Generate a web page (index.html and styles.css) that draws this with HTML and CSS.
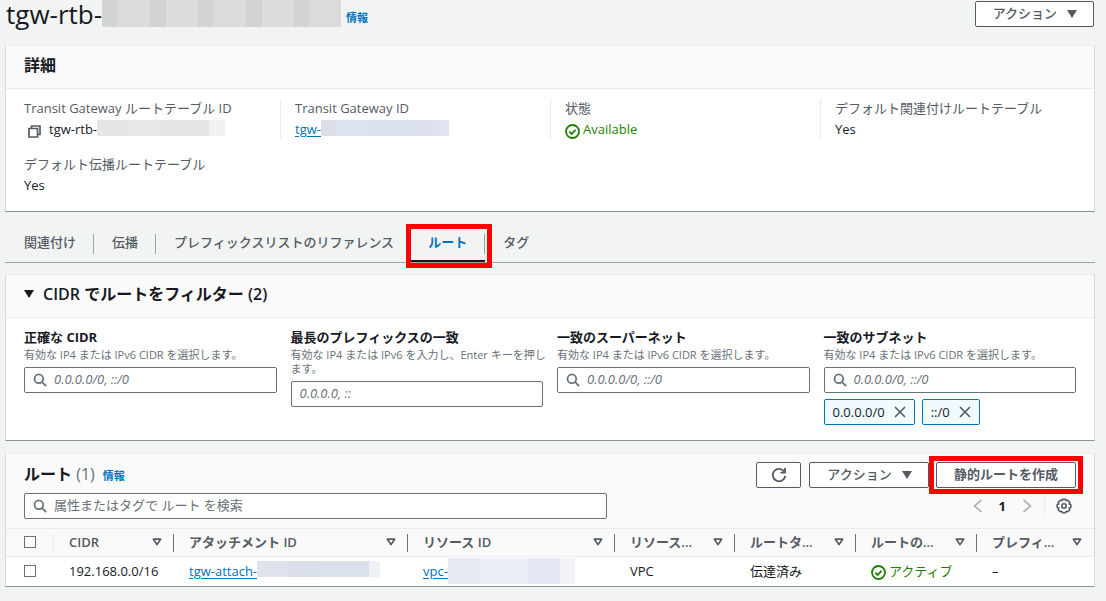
FILE: index.html
```html
<!DOCTYPE html>
<html lang="ja">
<head>
<meta charset="utf-8">
<title>Transit Gateway ルートテーブル</title>
<link rel="stylesheet" href="styles.css">
</head>
<body>
<svg class="defs" width="0" height="0" aria-hidden="true">
  <symbol id="search" viewBox="0 0 16 16"><circle cx="6.7" cy="6.7" r="5" fill="none" stroke="currentColor" stroke-width="2"/><path d="M10.2 10.2L15 15" stroke="currentColor" stroke-width="2"/></symbol>
  <symbol id="check" viewBox="0 0 16 16"><circle cx="8" cy="8" r="6.9" fill="none" stroke="currentColor" stroke-width="2"/><path d="M4.6 8.2l2.4 2.3 4.3-4.2" fill="none" stroke="currentColor" stroke-width="2"/></symbol>
  <symbol id="close" viewBox="0 0 12 12"><path d="M1 1l10 10M11 1L1 11" fill="none" stroke="currentColor" stroke-width="1.6"/></symbol>
  <symbol id="sort" viewBox="0 0 10 8"><path d="M1.4 1.2h7.2L5 6.6z" fill="none" stroke="currentColor" stroke-width="1.7" stroke-linejoin="round"/></symbol>
  <symbol id="caret" viewBox="0 0 10 8"><path d="M0 0h10L5 8z" fill="currentColor"/></symbol>
</svg>
<main class="page">
  <header class="page-head">
    <h1 class="page-title">tgw-rtb-<span class="mask mask-title"></span></h1>
    <a class="info" href="#">情報</a>
    <button class="btn push" type="button">アクション <svg class="caret"><use href="#caret"/></svg></button>
  </header>

  <section class="card">
    <div class="card-head"><h2 class="card-title">詳細</h2></div>
    <dl class="details">
      <div class="detail">
        <dt>Transit Gateway ルートテーブル ID</dt>
        <dd class="copy-value"><button class="icon-btn" type="button" aria-label="コピー"><svg class="ico-copy" viewBox="0 0 13 13"><path d="M3.5 3.5V1h8.5v8.500H9.500M1 3.500h8.500v8.500H1z" fill="none" stroke="currentColor" stroke-width="1.700"/></svg></button>tgw-rtb-<span class="mask mask-id"></span></dd>
      </div>
      <div class="detail">
        <dt>Transit Gateway ID</dt>
        <dd class="row-value"><a class="link" href="#">tgw-</a><span class="mask mask-id mask-blue"></span></dd>
      </div>
      <div class="detail">
        <dt>状態</dt>
        <dd class="ok"><svg class="ico-check"><use href="#check"/></svg>Available</dd>
      </div>
      <div class="detail">
        <dt>デフォルト関連付けルートテーブル</dt>
        <dd>Yes</dd>
      </div>
      <div class="detail">
        <dt>デフォルト伝播ルートテーブル</dt>
        <dd>Yes</dd>
      </div>
    </dl>
  </section>

  <nav class="tabs">
    <a class="tab" href="#">関連付け</a>
    <a class="tab" href="#">伝播</a>
    <a class="tab" href="#">プレフィックスリストのリファレンス</a>
    <a class="tab active marked" href="#">ルート</a>
    <a class="tab" href="#">タグ</a>
  </nav>

  <section class="card">
    <div class="card-head"><button class="expander" type="button"><svg class="caret"><use href="#caret"/></svg>CIDR でルートをフィルター (2)</button></div>
    <div class="filters">
      <div class="field">
        <label for="exact">正確な CIDR</label>
        <p class="hint">有効な IP4 または IPv6 CIDR を選択します。</p>
        <div class="input-box"><svg class="ico-search"><use href="#search"/></svg><input id="exact" type="text" placeholder="0.0.0.0/0, ::/0"></div>
      </div>
      <div class="field">
        <label for="longest">最長のプレフィックスの一致</label>
        <p class="hint">有効な IP4 または IPv6 を入力し、Enter キーを押します。</p>
        <div class="input-box"><input id="longest" type="text" placeholder="0.0.0.0, ::"></div>
      </div>
      <div class="field">
        <label for="supernet">一致のスーパーネット</label>
        <p class="hint">有効な IP4 または IPv6 CIDR を選択します。</p>
        <div class="input-box"><svg class="ico-search"><use href="#search"/></svg><input id="supernet" type="text" placeholder="0.0.0.0/0, ::/0"></div>
      </div>
      <div class="field">
        <label for="subnet">一致のサブネット</label>
        <p class="hint">有効な IP4 または IPv6 CIDR を選択します。</p>
        <div class="input-box"><svg class="ico-search"><use href="#search"/></svg><input id="subnet" type="text" placeholder="0.0.0.0/0, ::/0"></div>
        <div class="tokens">
          <span class="token">0.0.0.0/0<button class="icon-btn" type="button" aria-label="削除"><svg class="ico-close"><use href="#close"/></svg></button></span>
          <span class="token">::/0<button class="icon-btn" type="button" aria-label="削除"><svg class="ico-close"><use href="#close"/></svg></button></span>
        </div>
      </div>
    </div>
  </section>

  <section class="card card-routes">
    <div class="table-head">
      <div class="title-row">
        <h2 class="card-title">ルート <span class="count">(1)</span></h2>
        <a class="info" href="#">情報</a>
        <div class="actions push">
          <button class="btn btn-refresh" type="button" aria-label="更新"><svg class="ico-refresh" viewBox="0 0 16 16"><path d="M13.300 4.800A6.200 6.200 0 1 0 14.200 8.800M14 1v4.600H9.400" fill="none" stroke="currentColor" stroke-width="1.800"/></svg></button>
          <button class="btn btn-menu" type="button">アクション <svg class="caret"><use href="#caret"/></svg></button>
          <button class="btn btn-create marked" type="button">静的ルートを作成</button>
        </div>
      </div>
      <div class="search-row">
        <div class="input-box search-box"><svg class="ico-search"><use href="#search"/></svg><input class="plain" type="text" aria-label="ルートを検索" placeholder="属性またはタグで ルート を検索"></div>
        <div class="pager push">
          <button class="icon-btn faint" type="button" aria-label="前へ"><svg class="ico-arrow" viewBox="0 0 10 14"><path d="M8.500 1L1.500 7l7 6" fill="none" stroke="currentColor" stroke-width="1.700"/></svg></button>
          <b class="page-no">1</b>
          <button class="icon-btn faint" type="button" aria-label="次へ"><svg class="ico-arrow" viewBox="0 0 10 14"><path d="M1.500 1l7 6-7 6" fill="none" stroke="currentColor" stroke-width="1.700"/></svg></button>
          <span class="pager-rule"></span>
          <button class="icon-btn" type="button" aria-label="設定"><svg class="ico-gear" viewBox="0 0 16 16"><path d="M6.500 1.200h3l.6 1.600 1.700-.6 2 2-.6 1.700 1.600.6v3l-1.600.6.6 1.700-2 2-1.700-.6-.6 1.600h-3l-.6-1.600-1.700.6-2-2 .6-1.700-1.600-.6v-3l1.600-.6-.6-1.700 2-2 1.700.6z" fill="none" stroke="currentColor" stroke-width="1.600" stroke-linejoin="round"/><circle cx="8" cy="8" r="2.200" fill="none" stroke="currentColor" stroke-width="1.600"/></svg></button>
        </div>
      </div>
    </div>
    <table class="routes">
      <colgroup><col class="c-check"><col class="c-cidr"><col class="c-attach"><col class="c-resource"><col class="c-cidr"><col class="c-narrow"><col class="c-narrow"><col class="c-last"></colgroup>
      <thead>
        <tr>
          <th class="check-cell"><input type="checkbox" aria-label="すべて選択"></th>
          <th><div class="th"><span>CIDR</span><svg class="ico-sort"><use href="#sort"/></svg></div></th>
          <th><div class="th"><span>アタッチメント ID</span><svg class="ico-sort"><use href="#sort"/></svg></div></th>
          <th><div class="th"><span>リソース ID</span><svg class="ico-sort"><use href="#sort"/></svg></div></th>
          <th><div class="th"><span>リソース...</span><svg class="ico-sort"><use href="#sort"/></svg></div></th>
          <th><div class="th"><span>ルートタ...</span><svg class="ico-sort"><use href="#sort"/></svg></div></th>
          <th><div class="th"><span>ルートの...</span><svg class="ico-sort"><use href="#sort"/></svg></div></th>
          <th><div class="th"><span>プレフィ...</span><svg class="ico-sort"><use href="#sort"/></svg></div></th>
        </tr>
      </thead>
      <tbody>
        <tr>
          <td class="check-cell"><input type="checkbox" aria-label="192.168.0.0/16 を選択"></td>
          <td>192.168.0.0/16</td>
          <td><div class="row-value"><a class="link" href="#">tgw-attach-</a><span class="mask mask-blue mask-attach"></span></div></td>
          <td><div class="row-value"><a class="link" href="#">vpc-</a><span class="mask mask-blue mask-vpc"></span></div></td>
          <td>VPC</td>
          <td>伝達済み</td>
          <td><div class="ok"><svg class="ico-check"><use href="#check"/></svg>アクティブ</div></td>
          <td>–</td>
        </tr>
      </tbody>
    </table>
  </section>
</main>
</body>
</html>
```
FILE: styles.css
```css
* { box-sizing: border-box; }
body {
  margin: 0;
  background: #f2f3f3;
  color: #16191f;
  font: 13px/20px "Open Sans", "Noto Sans CJK JP", sans-serif;
}
h1, h2, p, dl, dd { margin: 0; }
button, input { font: inherit; color: inherit; }
svg { flex: none; display: block; }
a { color: #0073bb; text-decoration: none; }
.defs { position: absolute; }
.page { padding: 0 11px 14px 5px; }
.push { margin-left: auto; }
.link { text-decoration: underline; text-underline-offset: 2px; }
.info { font-size: 11px; font-weight: 700; line-height: 16px; }

/* Page header */
.page-head { display: flex; align-items: flex-start; height: 45px; padding-left: 1px; }
.page-title { display: flex; align-items: flex-start; font-size: 26px; line-height: 28px; font-weight: 400; }
.page-head .info { margin: 10px 0 0 5px; }
.page-head .btn { margin: 1px 1px 0 auto; }
.mask {
  display: inline-block;
  background: repeating-linear-gradient(90deg, #d3d4d4 0 16px, #dbdbdc 16px 48px, #d2d3d3 48px 64px, #dcdddd 64px 96px);
}
.mask-title { width: 239px; height: 27px; }
.mask-id { width: 128px; height: 16px; margin-bottom: 4px; background: linear-gradient(90deg, #e5e5e5 0 32px, #e8e8e8 32px 64px, #e4e4e5 64px 112px, #f1f1f2 112px); }
.mask-blue { background: linear-gradient(90deg, #dcdfea 0 16px, #dce4f0 16px 48px, #dbe1ec 48px 96px, #dee1eb 96px 112px, #dfe4ef 112px); }
.mask-attach { width: 123px; height: 16px; margin-bottom: 3px; background: linear-gradient(90deg, #dde2ed 0 32px, #d8deea 32px 64px, #dae1ed 64px 112px, #f0f1f6 112px); }
.mask-vpc { width: 127px; height: 26px; background: linear-gradient(90deg, #e6eaf3 0 32px, #e9edf5 32px 80px, #e4e8f3 80px 112px, #f1f3f9 112px); }

/* Buttons */
.btn {
  display: inline-flex;
  align-items: center;
  justify-content: center;
  gap: 10px;
  height: 26px;
  padding: 0 16px 2px 17px;
  border: 1px solid #545b64;
  border-radius: 2px;
  background: #fff;
  color: #545b64;
  font-weight: 500;
  white-space: nowrap;
}
.btn .caret { margin-top: 2px; }
.caret { width: 10px; height: 8px; }
.icon-btn { display: inline-flex; padding: 0; border: 0; background: none; color: #545b64; }

/* Cards */
.card { background: #fff; border: 1px solid #d5dbdb; border-top-color: #eaeded; border-bottom-color: #879596; }
.card-head { display: flex; align-items: center; height: 43px; padding: 0 18px 4px; background: #fafafa; border-bottom: 1px solid #eaeded; }
.card-title { font-size: 16px; line-height: 24px; font-weight: 700; }

.details { display: grid; grid-template-columns: repeat(4, 1fr); row-gap: 15px; padding: 10px 4px 15px; }
.detail { min-height: 41px; padding-left: 14px; border-left: 1px solid #eaeded; line-height: 21px; }
.detail:nth-child(4n + 1) { border-color: transparent; padding-left: 13px; }
.detail dt { color: #545b64; line-height: 18px; margin-bottom: 2px; }
.copy-value, .row-value, .ok { display: flex; align-items: center; }
.copy-value { padding-left: 4px; }
.copy-value .icon-btn { margin: 3px 8px 0 0; }
.ico-copy { width: 13px; height: 13px; }
.ok { gap: 3px; color: #1d8102; }
.ico-check { width: 15px; height: 15px; margin-top: 3px; }

/* Tabs */
.tabs { display: flex; align-items: stretch; height: 51px; margin-bottom: 11px; padding: 12px 0 0 1px; border-bottom: 1px solid #95a5a6; }
.tab { position: relative; display: flex; align-items: center; padding: 0 18px 2px; color: #545b64; font-weight: 500; }
.tab:not(:last-child)::before { content: ""; position: absolute; right: 0; top: 10px; height: 20px; border-right: 1px solid #95a5a6; }
.tab:nth-child(3)::before { display: none; }
.tab:nth-child(3) { padding-right: 16px; }
.tab.active { color: #0073bb; font-weight: 700; border-bottom: 2px solid #16191f; padding-bottom: 0; }
.marked { position: relative; }
.marked::after { content: ""; position: absolute; border: 5px solid #f00; inset: -7px -8px; pointer-events: none; }
.tab.marked::after { inset: 0 -7px -8px -4px; }

/* Filters */
.expander { display: flex; align-items: center; gap: 9px; padding: 0; border: 0; background: none; font-size: 16px; font-weight: 600; }
.filters { display: grid; grid-template-columns: repeat(4, 1fr); column-gap: 14px; padding: 10px 18px 15px; }
.field label { display: block; line-height: 18px; font-weight: 700; }
.hint { margin: 0 -8px 5px 0; color: #687078; font-size: 11px; line-height: 14px; padding-top: 2px; }
.input-box { display: flex; align-items: center; height: 26px; padding: 0 8px; border: 1px solid #687078; border-radius: 2px; background: #fff; color: #687078; }
.input-box input { flex: 1; min-width: 0; padding: 0 0 2px; border: 0; outline: 0; background: none; color: #16191f; line-height: 20px; }
.input-box input::placeholder { color: #687078; font-style: italic; opacity: 1; }
.input-box input.plain::placeholder { font-style: normal; }
.ico-search { width: 14px; height: 14px; margin-right: 7px; }
.tokens { display: flex; gap: 7px; margin-top: 6px; }
.token { display: flex; align-items: center; gap: 9px; height: 26px; padding: 0 8px; border: 1px solid #0073bb; border-radius: 2px; background: #f1faff; line-height: 20px; }
.ico-close { width: 12px; height: 12px; }

/* Routes table */
.card-routes { margin-top: 12px; }
.table-head { padding: 7px 18px 9px; background: #fafafa; }
.title-row { display: flex; align-items: center; height: 28px; margin-bottom: 4px; }
.title-row .card-title { margin-bottom: 2px; }
.count { color: #687078; font-weight: 400; }
.title-row .info { margin: 2px 0 0 8px; }
.actions { display: flex; }
.btn-refresh { width: 45px; margin-right: 8px; padding: 0; }
.btn-menu { width: 120px; }
.btn-create { width: 140px; margin-left: 7px; padding: 0 0 2px; font-weight: 700; }
.ico-refresh { width: 16px; height: 16px; }
.search-row { display: flex; align-items: center; gap: 20px; }
.search-box { flex: 0 1 583px; }
.pager { display: flex; align-items: center; padding-right: 4px; }
.page-no { margin: 0 16px; }
.faint { color: #aab7b8; }
.ico-arrow { width: 10px; height: 14px; }
.pager-rule { height: 24px; margin: 0 11px 0 12px; border-left: 1px solid #eaeded; }
.ico-gear { width: 16px; height: 16px; }
.routes { width: 100%; table-layout: fixed; border-collapse: collapse; }
.c-check { width: 48px; }
.c-cidr { width: 120px; }
.c-narrow { width: 121px; }
.c-last { width: 117px; }
.c-attach { width: 234px; }
.c-resource { width: 207px; }
.routes thead tr { height: 28px; background: #fafafa; border-top: 1px solid #eaeded; border-bottom: 1px solid #eaeded; }
.routes tbody tr { height: 29px; }
.routes th, .routes td { padding: 0 0 1px 15px; text-align: left; white-space: nowrap; }
.routes .check-cell { padding-left: 18px; }
.routes input { appearance: none; display: block; width: 12px; height: 12px; margin: 0; border: 1px solid #687078; background: #fff; }
.th { display: flex; align-items: center; justify-content: space-between; color: #545b64; font-weight: 600; padding-right: 12px; }
.routes th { background: linear-gradient(#687078, #687078) right center / 1px 18px no-repeat; }
.routes th:first-child { background-image: linear-gradient(#eaeded, #eaeded); }
.routes th:last-child { background: none; }
.ico-sort { width: 10px; height: 8px; }
```
